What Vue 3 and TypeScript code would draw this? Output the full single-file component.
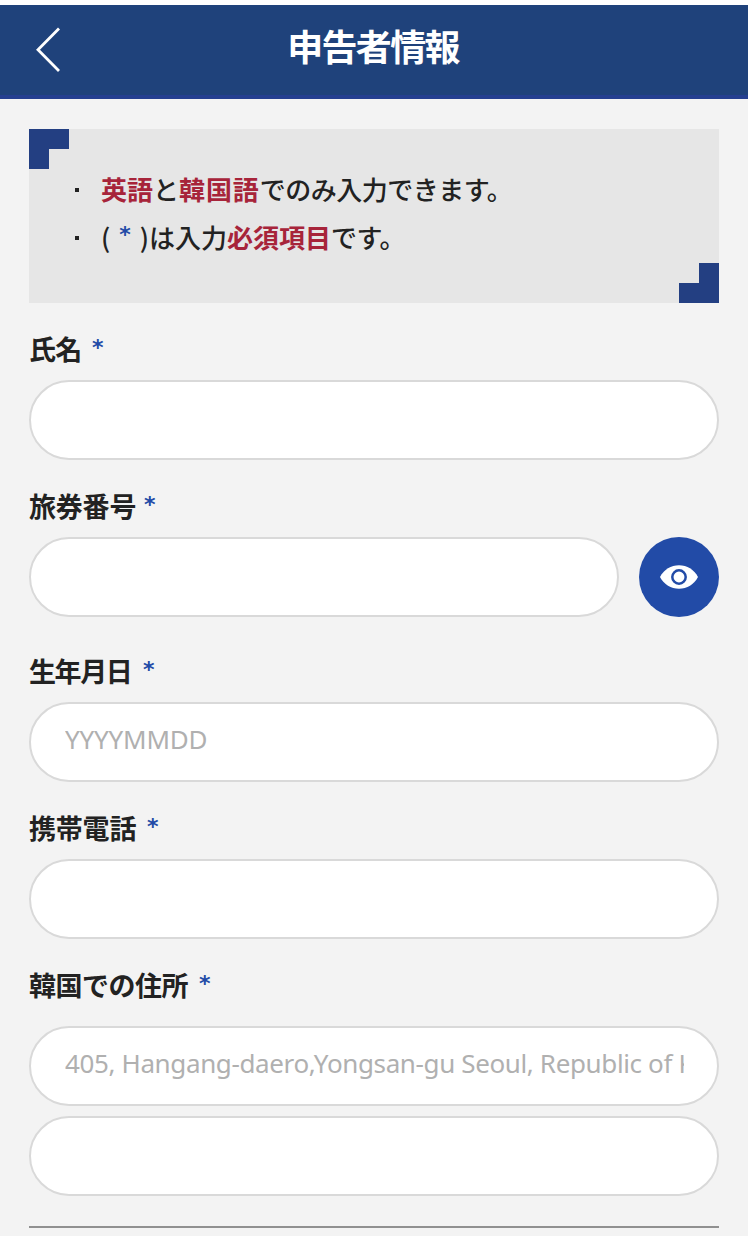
<script setup lang="ts">
import { ref } from 'vue'

interface Field {
  id: string
  label: string
  placeholders: string[]
  action?: boolean
}

const fields: Field[] = [
  { id: 'name', label: '氏名', placeholders: [''] },
  { id: 'passport', label: '旅券番号', placeholders: [''], action: true },
  { id: 'birth', label: '生年月日', placeholders: ['YYYYMMDD'] },
  { id: 'phone', label: '携帯電話', placeholders: [''] },
  {
    id: 'address',
    label: '韓国での住所',
    placeholders: ['405, Hangang-daero,Yongsan-gu Seoul, Republic of Korea', ''],
  },
]

const masked = ref(false)
</script>

<template>
  <div class="page">
    <header class="header">
      <button class="back" type="button" aria-label="戻る">
        <svg width="28" height="46" viewBox="0 0 28 46">
          <path d="M25 2.500 4 23.800 25 45" fill="none" stroke="#fff" stroke-width="2.8" />
        </svg>
      </button>
      <h1 class="title">申告者情報</h1>
    </header>

    <main class="content">
      <ul class="notice">
        <li class="note">
          <span class="dot"></span>
          <span><b>英語</b>と<b class="wide">韓国語</b><span class="tight">でのみ入力できます。</span></span>
        </li>
        <li class="note">
          <span class="dot"></span>
          <span class="legend"><span class="paren">(</span><i class="star">*</i><span class="paren">)</span></span>
          <span>は入力<b>必須項目</b><span class="tight">です。</span></span>
        </li>
      </ul>

      <section v-for="f in fields" :key="f.id" class="field" :class="f.id">
        <div class="label">
          <label class="caption" :for="f.id">{{ f.label }}</label>
          <i class="star">*</i>
        </div>
        <div v-for="(p, i) in f.placeholders" :key="i" class="row">
          <input
            :id="i === 0 ? f.id : undefined"
            class="input"
            :type="f.action && masked ? 'password' : 'text'"
            :placeholder="p"
          />
          <button v-if="f.action" class="eye" type="button" aria-label="表示" @click="masked = !masked">
            <svg width="38" height="24" viewBox="0 0 38 24">
              <path d="M0 12C4 4.500 11 .3 19 .3S34 4.500 38 12c-4 7.500-11 11.700-19 11.700S4 19.500 0 12Z" fill="#fff" />
              <circle cx="19" cy="12" r="6.700" fill="#fff" stroke="#224ba7" stroke-width="2.500" />
            </svg>
          </button>
        </div>
      </section>
      <hr class="rule" />
    </main>
  </div>
</template>

<style>
body {
  background: #f3f3f3;
}
</style>

<style scoped>
.page {
  box-sizing: border-box;
  height: 1236px;
  overflow: hidden;
  border-top: 5px solid #fff;
  background: #f3f3f3;
  color: #222;
  font-family: 'Noto Sans CJK JP', sans-serif;
}
.header {
  box-sizing: border-box;
  height: 94px;
  display: grid;
  grid-template-columns: 100px 1fr 100px;
  align-items: start;
  background: #1f427b;
  border-bottom: 4px solid #253f90;
}
.back {
  margin: 21px 0 0 34px;
  padding: 0;
  width: 28px;
  height: 46px;
  border: 0;
  background: none;
}
.back svg,
.eye svg {
  display: block;
}
.title {
  margin: 0;
  padding-right: 2px;
  text-align: center;
  color: #fff;
  font-size: 36px;
  font-weight: 700;
  line-height: 80px;
  letter-spacing: -1.7px;
}
.content {
  padding: 30px 29px 0;
}
.notice {
  position: relative;
  box-sizing: border-box;
  height: 174px;
  margin: 0;
  padding: 36px 0 0 45px;
  list-style: none;
  background: #e6e6e6;
}
.notice::before,
.notice::after {
  content: '';
  position: absolute;
  width: 40px;
  height: 40px;
  background: #233f82;
}
.notice::before {
  top: 0;
  left: 0;
  clip-path: polygon(0 0, 100% 0, 100% 50%, 50% 50%, 50% 100%, 0 100%);
}
.notice::after {
  right: 0;
  bottom: 0;
  clip-path: polygon(50% 0, 100% 0, 100% 100%, 0 100%, 0 50%, 50% 50%);
}
.note {
  display: flex;
  align-items: center;
  height: 48px;
  font-size: 26px;
  font-weight: 500;
  line-height: 48px;
  white-space: nowrap;
}
.note b {
  color: #a7243a;
  font-weight: 700;
}
.note .wide {
  letter-spacing: 0.9px;
}
.note .tight {
  letter-spacing: -0.5px;
}
.dot {
  width: 4px;
  height: 4px;
  margin: 1px 22px 0 1px;
  background: #222;
}
.legend {
  display: flex;
  width: 48px;
  justify-content: space-between;
}
.star {
  color: #224ba7;
  font-family: 'DejaVu Sans', sans-serif;
  font-size: 22px;
  font-style: normal;
  font-weight: 700;
}
.legend .star {
  line-height: 44px;
}
.label .star {
  line-height: 36px;
}
.field {
  margin-top: 27px;
}
.field.birth {
  margin-top: 35px;
}
.label {
  display: flex;
  height: 40px;
  margin-bottom: 10px;
  line-height: 38px;
}
.caption {
  width: 107px;
  margin-right: 8px;
  font-size: 27px;
  font-weight: 700;
  letter-spacing: -0.2px;
  white-space: nowrap;
}
.name .caption {
  width: 55px;
  letter-spacing: -0.8px;
}
.birth .caption {
  width: 106px;
  letter-spacing: -1.4px;
}
.phone .caption {
  width: 110px;
}
.address .caption {
  width: 162px;
  letter-spacing: -0.5px;
}
.address .label {
  margin-bottom: 20px;
}
.row {
  display: flex;
  gap: 20px;
}
.row + .row {
  margin-top: 10px;
}
.input {
  box-sizing: border-box;
  flex: 1;
  min-width: 0;
  height: 80px;
  margin: 0;
  padding: 0 33px 6px 34px;
  border: 2px solid #d9d9d9;
  border-radius: 40px;
  outline: 0;
  background: #fff;
  color: #222;
  font-family: 'Noto Sans', sans-serif;
  font-size: 26px;
}
.input::placeholder {
  color: #b0b0b0;
  opacity: 1;
  font-weight: 400;
}
.birth .input {
  letter-spacing: -0.2px;
}
.address .input {
  letter-spacing: -0.37px;
}
.eye {
  display: flex;
  align-items: center;
  justify-content: center;
  width: 80px;
  height: 80px;
  padding: 0;
  border: 0;
  border-radius: 50%;
  background: #224ba7;
}
.rule {
  height: 2px;
  margin: 30px 0 0;
  border: 0;
  background: #909090;
}
</style>
